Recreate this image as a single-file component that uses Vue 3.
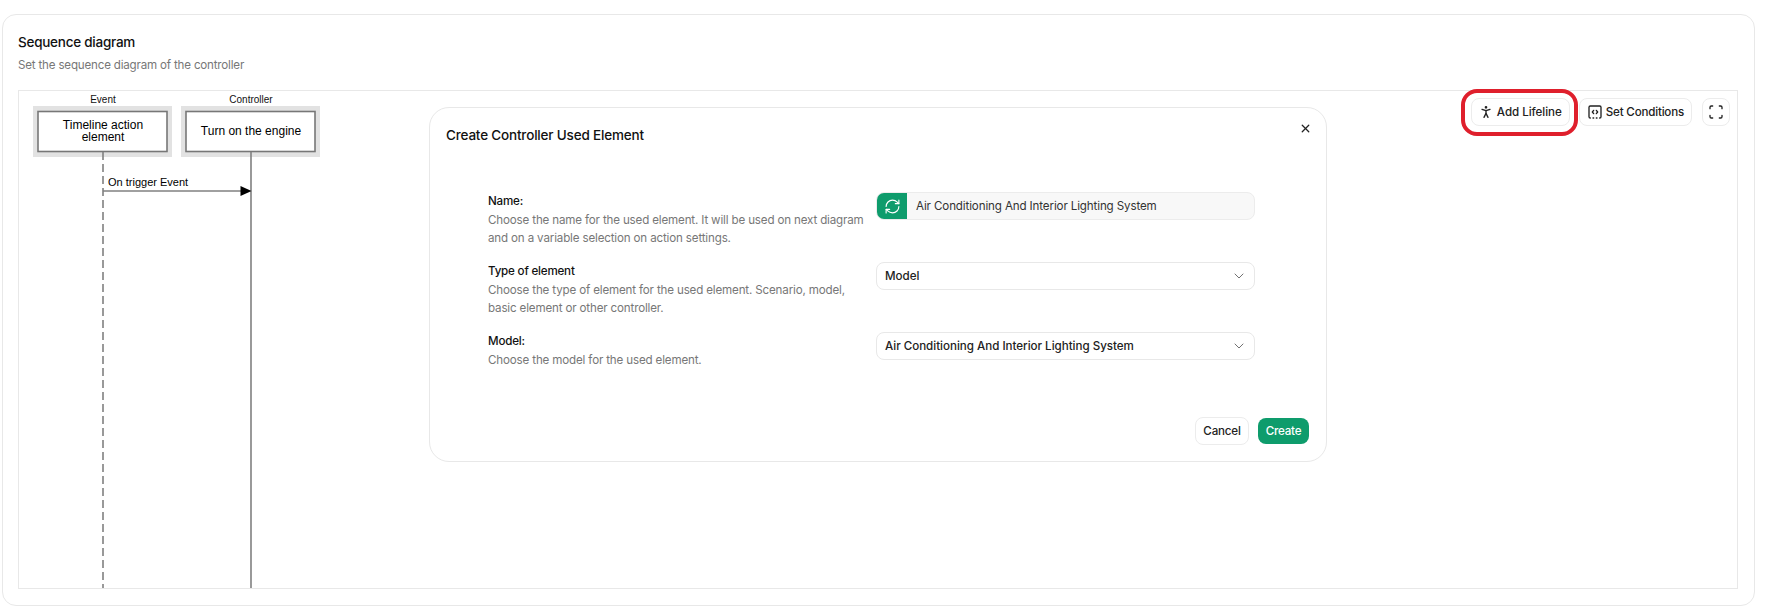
<template>
  <div class="page">
    <section class="card">
      <h2 class="card-title">Sequence diagram</h2>
      <p class="card-sub">Set the sequence diagram of the controller</p>

      <div class="canvas">
        <svg class="diagram" width="340" height="497" viewBox="0 0 340 497">
          <g v-for="box in boxes" :key="box.label">
            <rect :x="box.x" y="15" width="139" height="51" fill="#e2e2e2" />
            <rect :x="box.x + 5" y="20.5" width="129" height="40" fill="#fff" stroke="#777" stroke-width="1.6" />
            <text :x="box.x + 70" y="11.5" class="d-small" text-anchor="middle">{{ box.label }}</text>
            <text
              v-for="(line, i) in box.lines"
              :key="line"
              :x="box.x + 70"
              :y="box.textY + i * 12"
              class="d-box"
              text-anchor="middle"
            >{{ line }}</text>
          </g>
          <line x1="84" y1="61" x2="84" y2="497" stroke="#808080" stroke-width="1.6" stroke-dasharray="8 4" />
          <line x1="232" y1="61" x2="232" y2="497" stroke="#808080" stroke-width="1.6" />
          <line x1="84" y1="100" x2="223" y2="100" stroke="#808080" stroke-width="1.4" />
          <polygon points="221.5,95 232.5,100 221.5,105" fill="#000" />
          <text x="89" y="95" class="d-msg">On trigger Event</text>
        </svg>

        <div class="toolbar">
          <button class="tool-btn tool-add">
            <svg class="icon" viewBox="0 0 24 24"><circle cx="12" cy="5" r="1" /><path d="m9 20 3-6 3 6" /><path d="m6 8 6 2 6-2" /><path d="M12 10v4" /></svg>
            Add Lifeline
          </button>
          <button class="tool-btn">
            <svg class="icon" viewBox="0 0 24 24"><path d="M10 9.5 8 12l2 2.5" /><path d="M14 21h1" /><path d="m14 9.5 2 2.5-2 2.5" /><path d="M5 21a2 2 0 0 1-2-2V5a2 2 0 0 1 2-2h14a2 2 0 0 1 2 2v14a2 2 0 0 1-2 2" /><path d="M9 21h1" /></svg>
            Set Conditions
          </button>
          <button class="tool-btn tool-square">
            <svg class="icon" viewBox="0 0 24 24"><path d="M3 7V5a2 2 0 0 1 2-2h2" /><path d="M17 3h2a2 2 0 0 1 2 2v2" /><path d="M21 17v2a2 2 0 0 1-2 2h-2" /><path d="M7 21H5a2 2 0 0 1-2-2v-2" /></svg>
          </button>
        </div>
        <div class="highlight"></div>

        <div class="dialog">
          <div class="dialog-head">
            <h3>Create Controller Used Element</h3>
            <svg class="close" viewBox="0 0 24 24"><path d="M18 6 6 18" /><path d="m6 6 12 12" /></svg>
          </div>

          <div class="form">
            <div class="field-text">
              <label>Name:</label>
              <p>Choose the name for the used element. It will be used on next diagram and on a variable selection on action settings.</p>
            </div>
            <div class="input-group">
              <span class="regen">
                <svg viewBox="0 0 24 24"><path d="M3 12a9 9 0 0 1 9-9 9.75 9.75 0 0 1 6.74 2.74L21 8" /><path d="M21 3v5h-5" /><path d="M21 12a9 9 0 0 1-9 9 9.75 9.75 0 0 1-6.74-2.74L3 16" /><path d="M8 16H3v5" /></svg>
              </span>
              <span class="input-value">Air Conditioning And Interior Lighting System</span>
            </div>

            <div class="field-text">
              <label>Type of element</label>
              <p>Choose the type of element for the used element. Scenario, model, basic element or other controller.</p>
            </div>
            <div class="select">
              <span>Model</span>
              <svg class="chevron" viewBox="0 0 24 24"><path d="m6 9 6 6 6-6" /></svg>
            </div>

            <div class="field-text">
              <label>Model:</label>
              <p>Choose the model for the used element.</p>
            </div>
            <div class="select">
              <span>Air Conditioning And Interior Lighting System</span>
              <svg class="chevron" viewBox="0 0 24 24"><path d="m6 9 6 6 6-6" /></svg>
            </div>
          </div>

          <div class="dialog-foot">
            <button class="btn-cancel">Cancel</button>
            <button class="btn-create">Create</button>
          </div>
        </div>
      </div>
    </section>
  </div>
</template>

<script setup>
const boxes = [
  { label: 'Event', x: 14, lines: ['Timeline action', 'element'], textY: 38 },
  { label: 'Controller', x: 162, lines: ['Turn on the engine'], textY: 44 },
]
</script>

<style>
body {
  margin: 0;
  background: #fff;
}
</style>

<style scoped>
.page {
  height: 615px;
  box-sizing: border-box;
  padding: 14px 11px 9px 2px;
  font-family: Inter, "Liberation Sans", sans-serif;
  color: #111;
}

.card {
  height: 100%;
  box-sizing: border-box;
  border: 1px solid #e8e8e8;
  border-radius: 14px;
  padding: 18px 16px 16px 15px;
  display: flex;
  flex-direction: column;
}

.card-title {
  margin: 0;
  font-size: 13.5px;
  letter-spacing: -0.25px;
  line-height: 18px;
  font-weight: 550;
}

.card-sub {
  margin: 7px 0 0;
  font-size: 11.6px;
  letter-spacing: -0.19px;
  line-height: 15px;
  color: #777;
}

.canvas {
  position: relative;
  flex: 1;
  margin-top: 17px;
  border: 1px solid #e8e8e8;
}

.diagram {
  display: block;
}

.d-small {
  font: 10px "Liberation Sans", Arial, sans-serif;
  fill: #111;
}

.d-box {
  font: 12px "Liberation Sans", Arial, sans-serif;
  fill: #000;
}

.d-msg {
  font: 11px "Liberation Sans", Arial, sans-serif;
  fill: #000;
}

.toolbar {
  position: absolute;
  top: 7px;
  right: 7px;
  display: flex;
  gap: 10px;
}

.tool-btn {
  height: 28px;
  box-sizing: border-box;
  display: flex;
  align-items: center;
  gap: 3px;
  padding: 0 7px;
  background: #fff;
  border: 1px solid #ececec;
  border-radius: 8px;
  font: 500 11.6px Inter, "Liberation Sans", sans-serif;
  letter-spacing: -0.2px;
  color: #222;
}

.tool-add {
  padding-left: 6px;
  margin-right: -1px;
  letter-spacing: -0.05px;
}

.tool-square {
  width: 28px;
  padding: 0;
  justify-content: center;
}

.icon {
  width: 16px;
  height: 16px;
  flex: none;
  fill: none;
  stroke: #222;
  stroke-width: 2;
  stroke-linecap: round;
  stroke-linejoin: round;
}

.highlight {
  position: absolute;
  top: -2px;
  right: 159px;
  width: 117px;
  height: 47px;
  box-sizing: border-box;
  border: 4px solid #df1f2c;
  border-radius: 16px;
  pointer-events: none;
}

.dialog {
  position: absolute;
  top: 16px;
  left: 410px;
  width: 898px;
  height: 355px;
  box-sizing: border-box;
  background: #fff;
  border: 1px solid #e8e8e8;
  border-radius: 20px;
  padding: 16px 17px 16px 16px;
  display: flex;
  flex-direction: column;
}

.dialog-head {
  display: flex;
  justify-content: space-between;
  align-items: flex-start;
}

.dialog-head h3 {
  margin: 0;
  padding-top: 2px;
  font-size: 13.5px;
  letter-spacing: -0.18px;
  line-height: 18px;
  font-weight: 550;
}

.close {
  width: 13px;
  height: 13px;
  margin: -2px -3px 0 0;
  fill: none;
  stroke: #222;
  stroke-width: 2.4;
  stroke-linecap: round;
}

.form {
  margin: 49px 53px 0 42px;
  display: grid;
  grid-template-columns: 388px 379px;
  grid-template-rows: 62px 62px auto;
  row-gap: 8px;
}

.field-text {
  padding-right: 8px;
}

.field-text label {
  display: block;
  font-size: 11.6px;
  letter-spacing: -0.2px;
  line-height: 16px;
  font-weight: 550;
}

.field-text p {
  margin: 2px 0 0;
  font-size: 11.6px;
  letter-spacing: -0.16px;
  line-height: 18px;
  color: #777;
}

.input-group {
  height: 26px;
  display: flex;
  align-items: stretch;
  background: #f8f8f8;
  border: 1px solid #ececec;
  border-radius: 8px;
  overflow: hidden;
  margin-top: -1px;
}

.regen {
  width: 30px;
  display: flex;
  align-items: center;
  justify-content: center;
  background: #0e9c6c;
}

.regen svg {
  width: 17px;
  height: 17px;
  fill: none;
  stroke: #fff;
  stroke-width: 1.6;
  stroke-linecap: round;
  stroke-linejoin: round;
}

.input-value {
  align-self: center;
  margin-left: 9px;
  font-size: 11.6px;
  letter-spacing: -0.13px;
  color: #333;
}

.select {
  height: 28px;
  margin-top: -1px;
  box-sizing: border-box;
  display: flex;
  align-items: center;
  justify-content: space-between;
  padding: 0 7px 0 8px;
  background: #fff;
  border: 1px solid #e8e8e8;
  border-radius: 8px;
  font-size: 11.6px;
  letter-spacing: -0.02px;
  font-weight: 550;
  color: #222;
}

.chevron {
  width: 16px;
  height: 16px;
  fill: none;
  stroke: #666;
  stroke-width: 1.4;
  stroke-linecap: round;
  stroke-linejoin: round;
}

.dialog-foot {
  margin-top: auto;
  display: flex;
  justify-content: flex-end;
  align-items: center;
  gap: 9px;
}

.dialog-foot button {
  height: 26px;
  padding: 0;
  border-radius: 8px;
  font: 550 11.6px Inter, "Liberation Sans", sans-serif;
  letter-spacing: -0.2px;
}

.btn-cancel {
  width: 54px;
  height: 28px !important;
  background: #fff;
  border: 1px solid #ececec;
  color: #222;
}

.btn-create {
  width: 51px;
  background: #0e9c6c;
  border: 0;
  color: #fff;
}
</style>
